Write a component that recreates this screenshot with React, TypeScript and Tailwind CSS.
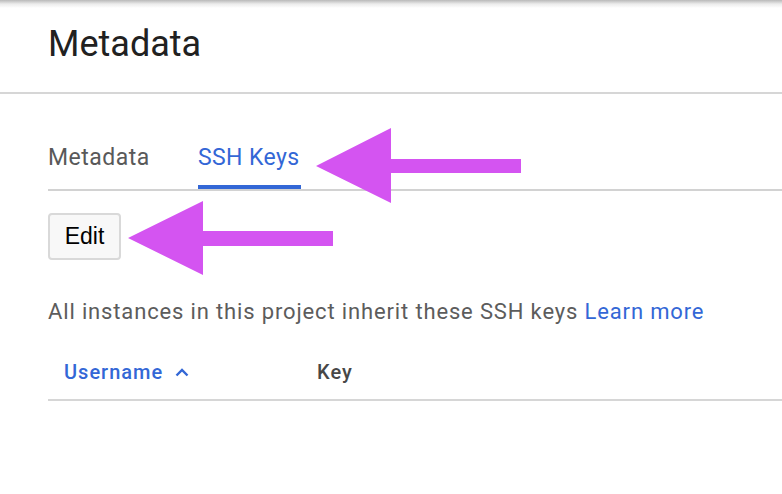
import React from "react";

export default function App() {
  const roboto = { fontFamily: "Roboto, 'Noto Sans', sans-serif" };
  return (
    <div className="relative w-[782px] h-[494px] bg-white overflow-hidden" style={roboto}>
      <div className="absolute left-0 top-0 w-full h-[8px] bg-linear-to-b from-[#b9b9b9] via-[#ececec] to-white" />
      <div className="h-[94px] pt-[23px] pl-[48px] border-b-2 border-[#d6d6d6]">
        <h1 className="text-[36px] leading-[42px] text-[#212121] font-normal">Metadata</h1>
      </div>
      <div className="pl-[48px]">
        <div className="flex h-[97px] border-b-2 border-[#d2d2d2]">
          <div className="w-[150px] pt-[50px] text-[23px] leading-[28px] tracking-[0.5px] text-[#595959]">Metadata</div>
          <div className="flex flex-col w-[103px]">
            <div className="pt-[50px] text-[23px] leading-[28px] tracking-[0.4px] text-[#3367d6]">SSH Keys</div>
            <div className="mt-auto h-[4px] bg-[#3367d6]" />
          </div>
        </div>
        <button
          className="mt-[22px] w-[73px] h-[47px] flex items-center justify-center rounded-[4px] border-2 border-[#d9d9d9] bg-[#f8f8f8] text-[23px] text-black"
          style={{ fontFamily: "'Liberation Sans', Arial, sans-serif" }}
        >
          Edit
        </button>
        <p className="mt-[40px] text-[22px] leading-[24px] tracking-[0.85px] text-[#5c5c5c]">
          All instances in this project inherit these SSH keys{" "}
          <span className="text-[#3367d6]">Learn more</span>
        </p>
        <div className="mt-[36px] pb-[15px] pl-[16px] flex items-center border-b-2 border-[#d6d6d6] text-[20px] leading-[24px] font-medium tracking-[1px]">
          <div className="w-[253px] flex items-center text-[#3367d6]">
            <span>Username</span>
            <svg className="ml-[12px]" width="14" height="9" viewBox="0 0 14 9">
              <polyline points="1.5,7.5 7,2 12.5,7.5" fill="none" stroke="#3367d6" strokeWidth="2.4" />
            </svg>
          </div>
          <div className="text-[#474747]">Key</div>
        </div>
      </div>
      <svg className="absolute left-0 top-0 pointer-events-none" width="782" height="494" viewBox="0 0 782 494">
        <polygon points="316,166 391,128 391,159 521,159 521,173 391,173 391,203" fill="#d454f1" />
        <polygon points="128,238 203,201 203,231 333,231 333,246 203,246 203,275" fill="#d454f1" />
      </svg>
    </div>
  );
}
